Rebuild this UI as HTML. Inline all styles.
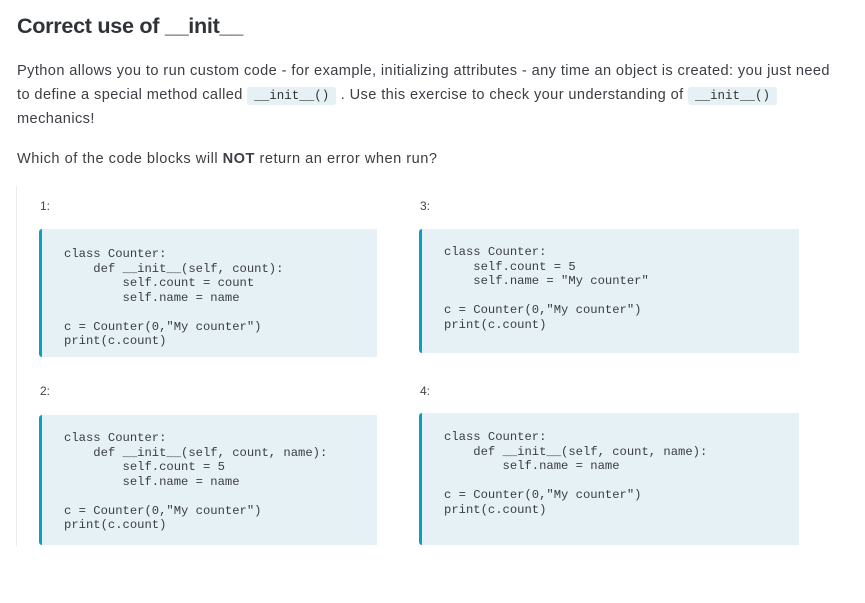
<!DOCTYPE html>
<html><head><style>
body{margin:0;background:#fff;width:865px;height:603px;position:relative;font-family:"Liberation Sans",sans-serif;color:#3b3e44;overflow:hidden}
h1{position:absolute;left:17px;top:13px;margin:0;font-size:21.6px;font-weight:bold;color:#2f3337;letter-spacing:-0.3px}
.p{position:absolute;left:17px;font-size:14.6px;letter-spacing:0.4px;line-height:23.5px;width:845px;white-space:nowrap}
code{font-family:"Liberation Mono",monospace;font-size:12.5px;letter-spacing:0;background:#e6f1f6;padding:2px 7px;border-radius:3px;color:#333}
.vl{position:absolute;left:16px;top:186px;width:1px;height:360px;background:#e8ecee}
.lab{position:absolute;font-size:12px;color:#444}
.card{position:absolute;background:#e6f1f6;border-left:3px solid #0a9fc0;border-radius:3px 0 0 3px}
pre{margin:0;position:absolute;font-family:"Liberation Mono",monospace;font-size:12.2px;line-height:14.5px;color:#3a3d42}
</style></head><body>
<h1>Correct use of __init__</h1>
<div class="p" style="top:60px">Python allows you to run custom code - for example, initializing attributes - any time an object is created: you just need<br>to define a special method called <code>__init__()</code> . Use this exercise to check your understanding of <code>__init__()</code><br>mechanics!</div>
<div class="p" style="top:148px;letter-spacing:0.5px">Which of the code blocks will <b>NOT</b> return an error when run?</div>
<div class="vl"></div>
<div class="lab" style="left:40px;top:199px">1:</div>
<div class="lab" style="left:420px;top:199px">3:</div>
<div class="lab" style="left:40px;top:384px">2:</div>
<div class="lab" style="left:420px;top:384px">4:</div>
<div class="card" style="left:39px;top:229px;width:335px;height:128px"><pre style="left:22px;top:18px">class Counter:
    def __init__(self, count):
        self.count = count
        self.name = name

c = Counter(0,"My counter")
print(c.count)</pre></div>
<div class="card" style="left:419px;top:229px;width:377px;height:124px"><pre style="left:22px;top:16px">class Counter:
    self.count = 5
    self.name = "My counter"

c = Counter(0,"My counter")
print(c.count)</pre></div>
<div class="card" style="left:39px;top:415px;width:335px;height:130px"><pre style="left:22px;top:16px">class Counter:
    def __init__(self, count, name):
        self.count = 5
        self.name = name

c = Counter(0,"My counter")
print(c.count)</pre></div>
<div class="card" style="left:419px;top:413px;width:377px;height:132px"><pre style="left:22px;top:17px">class Counter:
    def __init__(self, count, name):
        self.name = name

c = Counter(0,"My counter")
print(c.count)</pre></div>
</body></html>
